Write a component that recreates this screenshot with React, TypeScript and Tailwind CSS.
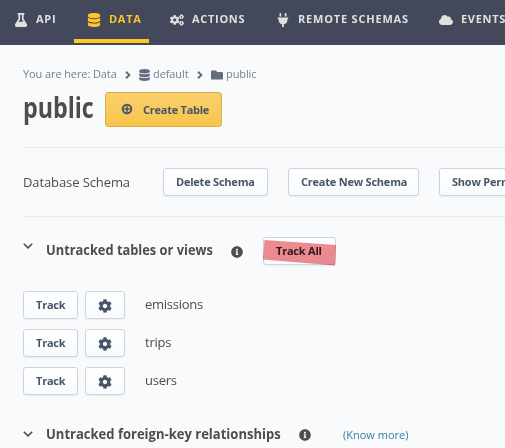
import type { ReactNode } from 'react';
import { FaCloud, FaCog, FaCogs, FaDatabase, FaFlask, FaFolder, FaInfoCircle, FaPlug } from 'react-icons/fa';

function Chevron({ className }: { className: string }) {
  return (
    <svg viewBox="0 0 10 6" className={className} fill="none" stroke="currentColor" strokeWidth="1.6">
      <path d="M.8.8 5 4.9 9.2.8" />
    </svg>
  );
}

function Crumb() {
  return (
    <svg viewBox="0 0 6 8" className="mt-0.5 h-2 w-1.5 shrink-0" fill="none" stroke="currentColor" strokeWidth="1.9">
      <path d="M1 .8 4.4 4 1 7.2" />
    </svg>
  );
}

function Button({ children, className }: { children: ReactNode; className: string }) {
  return (
    <button
      className={`flex h-7 shrink-0 items-center rounded-[3px] border border-[#cbd5e1] bg-linear-to-b from-white to-[#f8fafc] px-3 text-[11px] leading-4 font-bold tracking-[-0.22px] whitespace-nowrap text-[#475569] shadow-[0_1px_2px_rgba(0,0,0,0.06)] ${className}`}
    >
      {children}
    </button>
  );
}

function Section({ title, children, width, scale, chevron, className }: { title: string; children: ReactNode; width: string; scale: string; chevron: string; className: string }) {
  return (
    <div className={`flex h-7 items-center ${className}`}>
      <Chevron className={`mr-[13px] h-1.5 w-2.5 shrink-0 ${chevron}`} />
      <h2 className={`mb-1 h-6 shrink-0 ${width}`}>
        <span className={`block w-max origin-left text-[15px] leading-6 font-bold whitespace-nowrap ${scale}`}>{title}</span>
      </h2>
      {children}
    </div>
  );
}

function Row({ name }: { name: string }) {
  return (
    <div className="flex h-7 items-center">
      <Button className="w-[55px]">Track</Button>
      <Button className="ml-[7px] w-10">
        <FaCog className="mt-0.5 size-3.5 shrink-0" />
      </Button>
      <span className="mb-0.5 ml-5 text-[13px] leading-4 tracking-[-0.25px]">{name}</span>
    </div>
  );
}

export default function App() {
  return (
    <div className="h-[448px] w-[505px] overflow-hidden bg-[#f9fafc] font-['Open_Sans','Noto_Sans',sans-serif] text-[#4d4d4d]">
      <nav className="flex h-[45px] bg-[#43495a] text-[11px] leading-4 font-bold tracking-[0.7px] whitespace-nowrap text-[#e0e0e0]">
        <div className="flex h-[39px] w-[74px] shrink-0 items-center pl-3.5">
          <FaFlask className="mr-2 size-3.5" /><span className="mb-px">API</span>
        </div>
        <div className="flex h-[43px] w-[75px] shrink-0 items-center border-b-4 border-[#ffc627] pl-[13px] text-[#ffc627]">
          <FaDatabase className="mr-2 size-3.5" /><span className="mb-px">DATA</span>
        </div>
        <div className="flex h-[39px] w-[127px] shrink-0 items-center pl-[21px]">
          <FaCogs className="mr-2 size-3.5" /><span className="mb-px">ACTIONS</span>
        </div>
        <div className="flex h-[39px] w-[163px] shrink-0 items-center">
          <FaPlug className="mr-2 size-3.5" /><span className="mb-px tracking-[0.8px]">REMOTE SCHEMAS</span>
        </div>
        <div className="flex h-[39px] shrink-0 items-center">
          <FaCloud className="mr-2 size-3.5" /><span className="mb-px">EVENTS</span>
        </div>
      </nav>
      <main className="pl-[23px]">
        <div className="mt-[21px] flex h-4 items-center text-[11px] leading-4 tracking-[-0.1px] whitespace-nowrap text-[#767e93]">
          <span className="w-[94px]">You are here: Data</span>
          <span className="ml-2 flex items-center text-[#636b7e]"><Crumb /><FaDatabase className="mt-px ml-2 h-3 w-[11px]" /></span>
          <span className="ml-[3px] w-9">default</span>
          <span className="ml-2 flex items-center text-[#636b7e]"><Crumb /><FaFolder className="mt-px ml-2 size-3" /></span>
          <span className="ml-[3px]">public</span>
        </div>
        <div className="mt-2.5 flex h-[35px]">
          <h1 className="w-[82px] text-[28px] leading-[31px] font-bold">
            <span className="inline-block origin-left scale-x-[.83]">public</span>
          </h1>
          <button className="flex w-[117px] items-center rounded-[3px] border border-[#d9ae4b] bg-linear-to-b from-[#fad06e] to-[#f8c548] pl-[15px] text-[11px] leading-4 font-bold tracking-[-0.25px] whitespace-nowrap text-[#475569]">
            <svg viewBox="0 0 12 12" className="mr-2.5 mb-px size-3" fill="none" stroke="currentColor">
              <circle cx="6" cy="6" r="4.3" strokeWidth="2" />
              <path d="M6 3.2v5.6M3.2 6h5.6" strokeWidth="1.6" />
            </svg>
            Create Table
          </button>
        </div>
        <div className="mt-5 flex h-[70px] items-center border-y border-[#e9ebee] whitespace-nowrap">
          <span className="mb-px w-[140px] shrink-0 text-[13px] leading-4 tracking-[-0.1px]">Database Schema</span>
          <Button className="w-[105px]">Delete Schema</Button>
          <Button className="ml-5 w-[131px]">Create New Schema</Button>
          <Button className="ml-5 w-[150px]">Show Permissions</Button>
        </div>
        <Section title="Untracked tables or views" width="w-[167px]" scale="scale-x-[.856]" chevron="mb-2.5" className="mt-5">
          <FaInfoCircle className="mt-0.5 ml-[18px] size-3 shrink-0" />
          <div className="relative ml-5">
            <Button className="w-[73px] !text-[#352c3a]">Track All</Button>
            <svg viewBox="0 0 75 30" className="absolute top-0 left-0 h-[30px] w-[75px] mix-blend-multiply">
              <path d="M1.5 3 73 8 72 28.5 0 22.5Z" fill="#ee8c91" />
            </svg>
          </div>
        </Section>
        <div className="mt-[26px] flex flex-col gap-2.5">
          <Row name="emissions" />
          <Row name="trips" />
          <Row name="users" />
        </div>
        <Section title="Untracked foreign-key relationships" width="w-[235px]" scale="scale-x-[.868]" chevron="mb-0.5" className="mt-[26px]">
          <FaInfoCircle className="ml-[18px] size-3 shrink-0" />
          <a className="ml-8 text-[11px] leading-4 whitespace-nowrap text-[#337f9f]">(Know more)</a>
        </Section>
      </main>
    </div>
  );
}
